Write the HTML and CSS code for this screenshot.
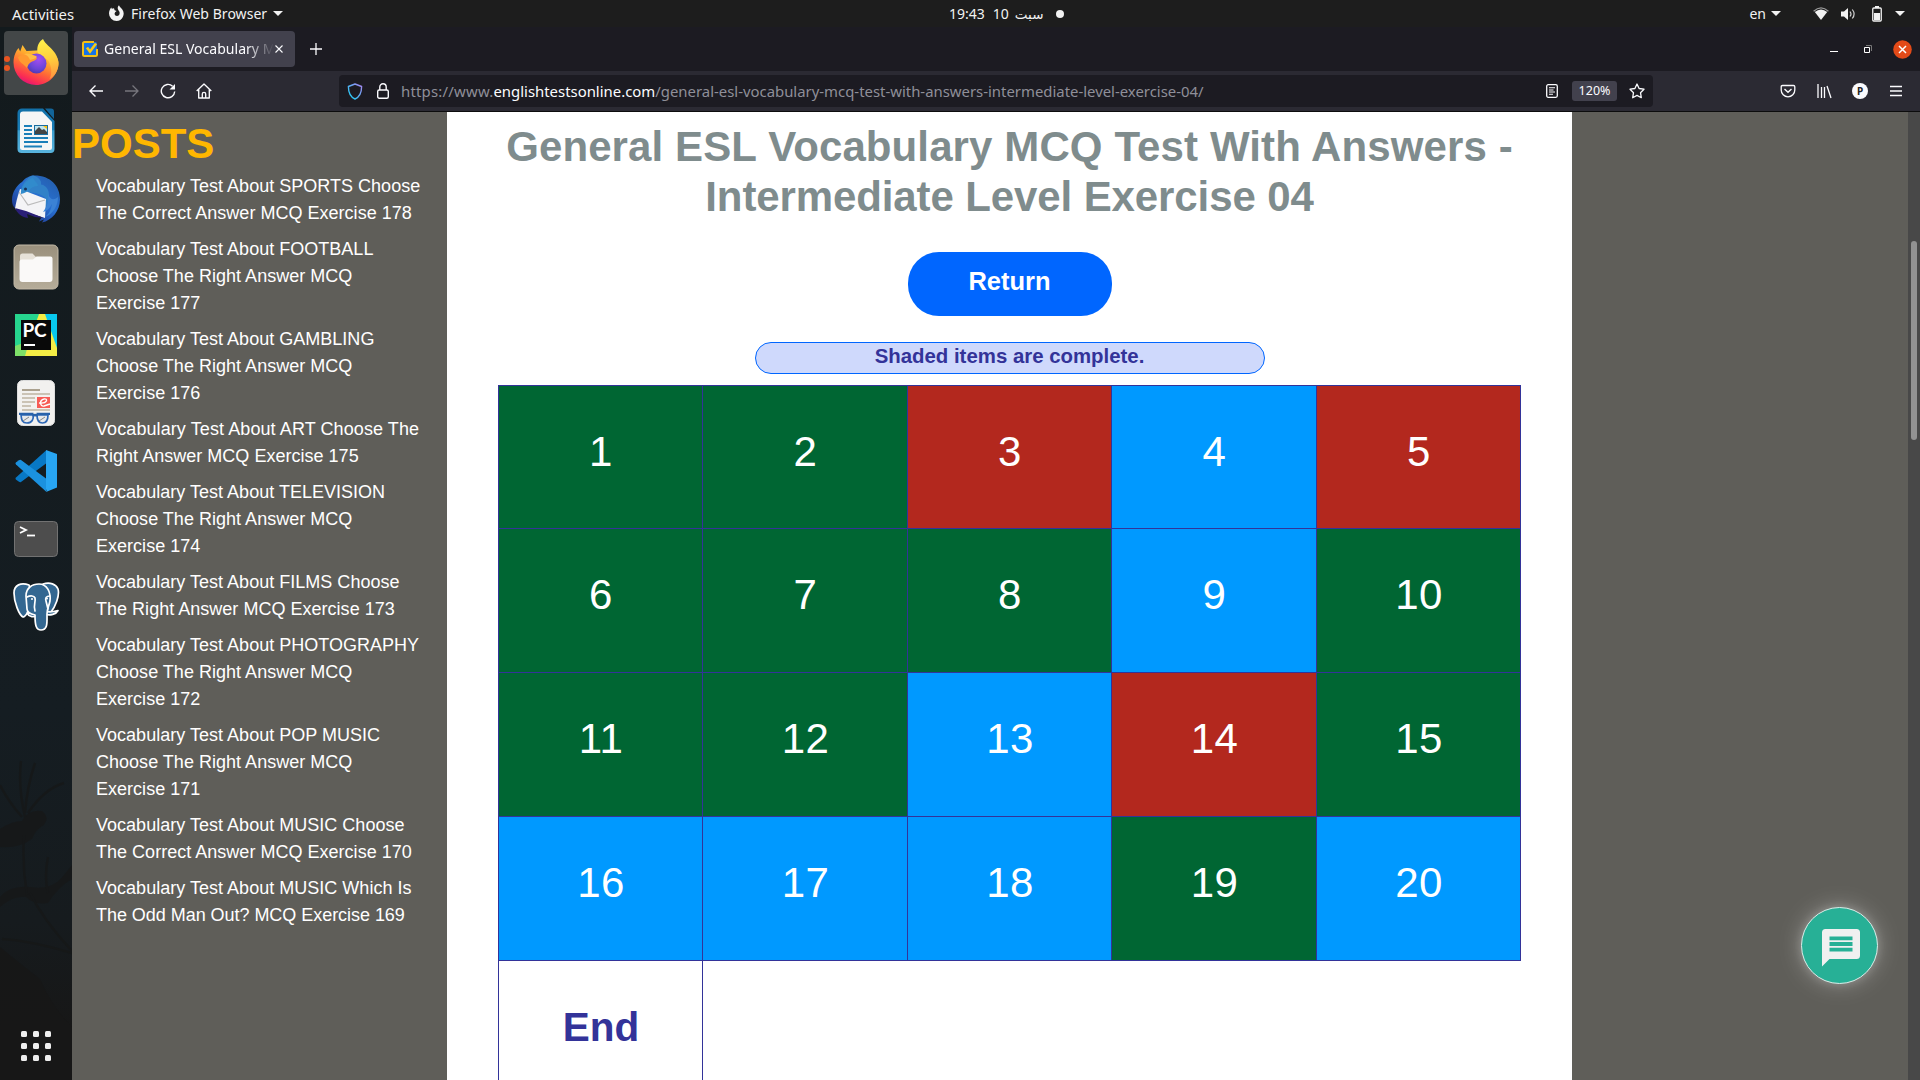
FILE: index.html
```html
<!DOCTYPE html>
<html lang="en">
<head>
<meta charset="utf-8">
<title>General ESL Vocabulary MCQ Test</title>
<link rel="stylesheet" href="styles.css">
</head>
<body>
<div class="desktop">
  <header class="topbar">
    <div class="top-left">
      <span class="activities">Activities</span>
      <span class="app-menu">
        <svg width="18" height="18" viewBox="0 0 18 18"><path d="M8.500 16a7.500 7.500 0 0 1-7.500-7.500C1 6 2 4 3.200 2.400l.6 1.400L6 3.200l.6 2 2 .8-1.500 1.300L6.500 9a2.600 2.600 0 0 0 5 .2c.5-2-.3-3-1.200-4.200C9.300 3.500 9.600 1.500 11 .2c.3 1.600 2 2.200 3.300 4.200A7.400 7.400 0 0 1 8.500 16z" fill="#f2f2f2"/></svg>
        <span class="app-name">Firefox Web Browser</span>
        <svg class="caret" width="10" height="5" viewBox="0 0 10 5"><path d="M0 0h10L5 5z" fill="#f2f2f2"/></svg>
      </span>
    </div>
    <div class="clock"><span>19:43</span><span class="day">10</span><span class="weekday" dir="rtl">سبت</span><i class="notice"></i></div>
    <div class="top-right">
      <span class="lang">en</span>
      <svg class="caret lang-caret" width="10" height="5" viewBox="0 0 10 5"><path d="M0 0h10L5 5z" fill="#f2f2f2"/></svg>
      <svg class="wifi" width="16" height="14" viewBox="0 0 16 14"><path d="M.6 4.200Q8-2.600 15.400 4.200" fill="none" stroke="#999" stroke-width="1.200"/><path d="M1.800 5Q8 0 14.200 5L8 13z" fill="#f2f2f2"/></svg>
      <svg class="volume" width="16" height="14" viewBox="0 0 16 14"><path d="M0 4.500h3L7 1v12L3 9.500H0z" fill="#f2f2f2"/><path d="M9 4.500q2 2.500 0 5M11.300 2.500q3.600 4.500 0 9" fill="none" stroke="#d0d0d0" stroke-width="1.200"/></svg>
      <svg class="battery" width="10" height="16" viewBox="0 0 10 16"><path d="M3 0h4v2H3z" fill="#f2f2f2"/><rect x=".75" y="2" width="8.500" height="13" rx="1" fill="none" stroke="#f2f2f2" stroke-width="1.300"/><path d="M2 7h6v7H2z" fill="#f2f2f2"/></svg>
      <svg class="caret" width="10" height="5" viewBox="0 0 10 5"><path d="M0 0h10L5 5z" fill="#f2f2f2"/></svg>
    </div>
  </header>

  <div class="workspace">
    <nav class="dock">
      <svg class="branches" width="72" height="330" viewBox="0 0 72 330"><path d="M0 230Q22 248 40 262 52 290 72 310V330H0z" fill="#171717"/><path d="M0 112q12-8 22-8 6-12 20-10 8 6 2 14-8 4-12 14-14 10-32 8zM0 180q10-12 30-10 22 4 34-12l8-10v14q-14 8-24 24-14 2-22-6-12-2-26 10z" fill="#171818"/><path d="M25 100Q18 70 21 44M25 96q2-26 10-50M28 96Q44 72 64 66M22 100Q8 84 0 68M24 118q-2 30 3 60M30 176q14 28 42 58M2 222q30 2 70 14M48 140q-4 20 0 36" fill="none" stroke="#161818" stroke-width="2.500"/></svg>
      <div class="dock-item active">
        <span class="running"><i></i><i></i></span>
        <svg class="firefox" width="48" height="48" viewBox="0 0 48 48">
          <defs>
            <linearGradient id="ff-body" x1=".8" y1="0" x2=".3" y2="1"><stop offset="0" stop-color="#ffe14a"/><stop offset=".35" stop-color="#ffb02e"/><stop offset=".62" stop-color="#ff6a36"/><stop offset=".85" stop-color="#fb2e52"/><stop offset="1" stop-color="#e0107c"/></linearGradient>
            <radialGradient id="ff-core" cx=".6" cy=".3" r=".8"><stop offset="0" stop-color="#a34ef0"/><stop offset=".6" stop-color="#6a45d6"/><stop offset="1" stop-color="#4536a8"/></radialGradient>
            <linearGradient id="ff-flame" x1=".4" y1="0" x2=".5" y2="1"><stop offset="0" stop-color="#fff14a"/><stop offset=".5" stop-color="#ffcf3c"/><stop offset="1" stop-color="#ff9440"/></linearGradient>
          </defs>
          <path d="M24 47A22.500 22.500 0 0 1 1.500 24.500C1.500 18 4 13 6.500 10l1.700 3.500L10.500 7l4 6L33 12c7 0 13 6 13.500 12.500C46.500 37 36.500 47 24 47z" fill="url(#ff-body)"/>
          <path d="M31 1c2 5 8 8 12 14 2 3 3.500 7 3.500 11 0 6-4 13-9 15 3-5 2-13-1-18-3-4-9-5-11-9-1-6 2-11 5.500-13z" fill="url(#ff-flame)"/>
          <circle cx="24.500" cy="25.500" r="10" fill="url(#ff-core)"/>
          <path d="M6 19c3-2 7-3 11-1 3 1 6 1 8 2-1 3-5 3-7 5-2 1-2 3-3 5-3-4-8-5-9-11z" fill="#ff9a30"/>
          <path d="M12 16c3-1 6-.5 9 1 2 .5 3 1 4 2-2 2-5 2-7 3-1-3-3-5-6-6z" fill="#ffbd45"/>
        </svg>
      </div>
      <div class="dock-item">
        <svg width="38" height="46" viewBox="0 0 38 46">
          <defs><linearGradient id="writer" x2="0" y2="1"><stop offset="0" stop-color="#1270a8"/><stop offset=".48" stop-color="#1b7fb9"/><stop offset=".5" stop-color="#3c9fcf"/><stop offset="1" stop-color="#58b3dd"/></linearGradient></defs>
          <path d="M5 .5h21L37.500 13v28a4 4 0 0 1-4 4h-29a4 4 0 0 1-4-4V5a4.500 4.500 0 0 1 4.500-4.500z" fill="url(#writer)"/>
          <path d="M28 .5h6a3 3 0 0 1 3 3V11z" fill="#12659a"/>
          <path d="M6 3.500h19L35 14v25.500a2.500 2.500 0 0 1-2.500 2.500h-27A2.500 2.500 0 0 1 3 39.500v-33a3 3 0 0 1 3-3z" fill="#f6f6f6"/>
          <path d="M7 18h8M7 22h8M7 26h8M7 30h24M7 34h24M7 38.500h18" stroke="#1b7fb9" stroke-width="2"/>
          <path d="M17 17h14v10H17z" fill="#1b6c9e"/><path d="M18 18h12v8H18z" fill="#c0e5ef"/><path d="M18 26v-3l4-4 3 3 2-1 3 3v2z" fill="#444"/><path d="M26 18h4v3z" fill="#ffc20e"/>
        </svg>
      </div>
      <div class="dock-item">
        <svg width="48" height="48" viewBox="0 0 48 48">
          <defs><linearGradient id="bird" x1="1" x2=".2" y2="1"><stop offset="0" stop-color="#245ba5"/><stop offset=".5" stop-color="#2870d1"/><stop offset="1" stop-color="#1d2b82"/></linearGradient></defs>
          <path d="M20 .5c18-1 28 10 28 24 0 11-8 21-18 23l2-3-5 2 3-5L4 34C1 32 0 29 0 25 0 17 5 10 10 7c3-4 6-5 10-6.500z" fill="url(#bird)"/>
          <path d="M10 19C7 14 14 2 21 .5c5 1 9 5 8 9 6 1 10 7 7 17l-5 14 3-17c-5-6-17-7-24-4.500z" fill="#3181c8"/>
          <path d="M8 14l26 10-1 19L3 34q1-8 5-20z" fill="#f4f4f6"/><path d="M7 17l9 13 17-5" fill="none" stroke="#bbb" stroke-width="1.200"/>
          <path d="M9 19C8 12 15 4 21 3c2 4 5 5 5 8-8 0-9 7-17 8z" fill="#318bcc"/><circle cx="13.500" cy="14" r="1.500" fill="#183155"/>
          <path d="M3 33l11 3 18 7-9-1-8-3 1 4C9 42 5 38 3 33z" fill="#2a1f77"/><path d="M36 19c1 6-1 13-5 18 4-1 7-4 9-8-1 6-3 10-7 13 8-3 13-11 13-20-4 3-7 4-10-3z" fill="#3b82d5"/>
        </svg>
      </div>
      <div class="dock-item">
        <svg width="46" height="46" viewBox="0 0 46 46"><defs><linearGradient id="files" x2="0" y2="1"><stop offset="0" stop-color="#9a907d"/><stop offset="1" stop-color="#b5ac99"/></linearGradient></defs><rect x="1" y="1" width="44" height="44" rx="5" fill="url(#files)" stroke="#c2b9a7" stroke-width="1"/><path d="M7 12a2.500 2.500 0 0 1 2.500-2.500h10l4 4-1 4H7z" fill="#e6e1d8"/><path d="M9 15.500h11l3.500-3h14a2 2 0 0 1 2 2V35a3 3 0 0 1-3 3h-27a3 3 0 0 1-3-3V18a2.500 2.500 0 0 1 2.500-2.500z" fill="#faf9f8"/></svg>
      </div>
      <div class="dock-item">
        <svg width="42" height="42" viewBox="0 0 42 42"><path d="M0 0h42v42H0z" fill="#26d58e"/><path d="M30 0h12v42H28z" fill="#08c8ee"/><path d="M0 32l16-6-4 16H0z" fill="#7de068"/><path d="M24 0h6l12 34v8H10l4-14z" fill="#f4ed45"/><path d="M6 6h30v30H6z" fill="#090909"/><text class="pc-text" x="7.500" y="22.500">PC</text><path d="M9 31h11" stroke="#fff" stroke-width="2"/></svg>
      </div>
      <div class="dock-item">
        <svg width="38" height="46" viewBox="0 0 38 46"><rect x=".5" y=".5" width="37" height="45" rx="5" fill="#f2f1ef" stroke="#ddd"/><path d="M5 10h18" stroke="#aba18f" stroke-width="2"/><path d="M5 14h28M5 18h13M5 22h13M5 26h9M5 30h28" stroke="#cbc3b5" stroke-width="2"/><path d="M20 17h13v11H20z" fill="#f75b55"/><path d="M22 23c9 1 9-5 5-4-5 1-4 8 0 7l6-2" fill="none" stroke="#fff" stroke-width="1.400"/><path d="M4 35h12c1 4-1 8-6 8S4.500 40 4 35zM20 35h11c0 5-2 8-5.500 8S20 40 20 35z" fill="#dfe3e8" fill-opacity=".65" stroke="#2d67b5" stroke-width="1.700"/><path d="M2 33.800h14.500M19.500 33.800H33M16 36q2-2 4 0" stroke="#2861aa" stroke-width="2.200" fill="none"/><path d="M6 41l6-4M22 41l6-4" fill="none" stroke="#888"/></svg>
      </div>
      <div class="dock-item">
        <svg width="42" height="42" viewBox="0 0 42 42"><path d="M1 27.500L31 .5v13L6 32q-1 .5-2-.2L.8 29.500q-.8-1 .2-2z" fill="#0878c5"/><path d="M1 14.500L31 41.500v-13L6 10q-1-.5-2 .2L.8 12.500q-.8 1 .2 2z" fill="#1b91df"/><path d="M31 0l11 4v33.500L31 42q1-1 0-3z" fill="#28a5f2"/></svg>
      </div>
      <div class="dock-item">
        <svg width="44" height="36" viewBox="0 0 44 36"><rect x=".5" y=".5" width="43" height="35" rx="4" fill="#4d4d4d" stroke="#727272"/><path d="M6 6l6 3-6 3" fill="none" stroke="#fff" stroke-width="1.800"/><path d="M13 14.500h8" stroke="#fff" stroke-width="1.800"/></svg>
      </div>
      <div class="dock-item">
        <svg width="48" height="50" viewBox="0 0 48 50"><g fill="#336791" stroke="#fff" stroke-width="1.700" stroke-linejoin="round" stroke-linecap="round"><path d="M17 3C9 0 2 3 2 11c0 9 5 22 9 24 2 0 4-4 6-6l4-12z"/><path d="M31 2c7-2 13 0 15 5 2 7-3 18-7 23-4 2-5-4-7-10z"/><path d="M24 31c-3-2-4 1-9 0 2 4 7 5 11 2M34 29c3 2 7 1 12-.5-2 4-8 5-12 4"/><path d="M14 14c0-8 6-12 13-12 8 0 12 8 11 17-1 5-3 8-3 13 0 8 1 16-6 16-5 0-6-5-6-15-4-1-8-2-8-6z"/><path d="M15 15c4-2 7-1 8 1 1 4-2 7 0 13M38 14c-4 0-5 2-4 5l2 8" fill="none"/></g><circle cx="20" cy="17" r="1" fill="#fff"/><circle cx="35" cy="16.500" r="1" fill="#fff"/></svg>
      </div>
      <div class="app-grid"><i></i><i></i><i></i><i></i><i></i><i></i><i></i><i></i><i></i></div>
    </nav>

    <main class="browser">
      <div class="tabs">
        <div class="tab">
          <svg width="16" height="16" viewBox="0 0 16 16"><rect x="1" y="1" width="14" height="14" rx="1.500" fill="#1673e6"/><path d="M12 1H2.500Q1 1 1 2.500v11Q1 15 2.500 15h11q1.500 0 1.500-1.500V8" fill="none" stroke="#f5bf12" stroke-width="2"/><path d="M5 6.500l3 4 6-8" fill="none" stroke="#f9c914" stroke-width="2.600"/></svg>
          <span class="tab-title">General ESL Vocabulary M</span>
          <svg class="tab-close" width="8" height="8" viewBox="0 0 8 8"><path d="M.5.5l7 7m0-7l-7 7" stroke="#fbfbfe" stroke-width="1.100"/></svg>
        </div>
        <svg class="new-tab" width="12" height="12" viewBox="0 0 12 12"><path d="M6 0v12M0 6h12" stroke="#fbfbfe" stroke-width="1.300"/></svg>
        <div class="window-buttons">
          <svg width="8" height="8" viewBox="0 0 8 8"><path d="M0 6.500h8" stroke="#fff"/></svg>
          <svg width="8" height="8" viewBox="0 0 8 8"><path d="M2 .5h5.500V6" stroke="#777" fill="none"/><path d="M.5 2.500h5v5h-5z" stroke="#fff" fill="none"/></svg>
          <svg width="19" height="19" viewBox="0 0 19 19"><circle cx="9.500" cy="9.500" r="9.300" fill="#e34a18"/><path d="M6 6l7 7m0-7l-7 7" stroke="#fff" stroke-width="1.500"/></svg>
        </div>
      </div>
      <div class="toolbar">
        <div class="nav-buttons">
          <svg width="16" height="16" viewBox="0 0 16 16"><path d="M15 8H2m5.500-5.500L2 8l5.500 5.500" fill="none" stroke="#fbfbfe" stroke-width="1.400"/></svg>
          <svg width="16" height="16" viewBox="0 0 16 16"><path d="M1 8h13M8.500 2.500L14 8l-5.500 5.500" fill="none" stroke="#77767d" stroke-width="1.300"/></svg>
          <svg width="16" height="16" viewBox="0 0 16 16"><path d="M12.600 3.200A6.700 6.700 0 1 0 14.700 8.500" fill="none" stroke="#fbfbfe" stroke-width="1.400"/><path d="M15 1v5.500H9.500z" fill="#fbfbfe"/></svg>
          <svg width="16" height="16" viewBox="0 0 16 16"><path d="M.7 8L8 1l7.300 7M2.700 6.500V15h10.600V6.500M6.300 15v-4a1.700 1.700 0 0 1 3.400 0v4" fill="none" stroke="#fbfbfe" stroke-width="1.350" stroke-linejoin="round"/></svg>
        </div>
        <div class="urlbar">
          <svg width="16" height="17" viewBox="0 0 16 17"><defs><linearGradient id="shield" x1="0" y1="1" x2="1" y2="0"><stop offset=".2" stop-color="#2ec5f4"/><stop offset="1" stop-color="#a982ee"/></linearGradient></defs><path d="M8 1l6.600 2.500c0 5-1 10-6.600 12.500C2.400 13.500 1.400 8.500 1.400 3.500z" fill="none" stroke="url(#shield)" stroke-width="1.400" stroke-linejoin="round"/></svg>
          <svg class="lock" width="12" height="16" viewBox="0 0 12 16"><rect x=".7" y="7" width="10.600" height="8.300" rx="1.500" fill="none" stroke="#fbfbfe" stroke-width="1.400"/><path d="M2.800 7V4a3.200 3.200 0 0 1 6.400 0v3" fill="none" stroke="#fbfbfe" stroke-width="1.400"/></svg>
          <span class="url"><span class="url-scheme">https://www.</span><span class="url-host">englishtestsonline.com</span><span class="url-path">/general-esl-vocabulary-mcq-test-with-answers-intermediate-level-exercise-04/</span></span>
          <svg class="reader" width="12" height="14" viewBox="0 0 12 14"><rect x=".7" y=".7" width="10.600" height="12.600" rx="1.500" fill="none" stroke="#fbfbfe" stroke-width="1.300"/><path d="M3 3.700h6M3 6h4.500M3 8h6M3 10.300h4" stroke="#fbfbfe" stroke-width="1.100"/></svg>
          <span class="zoom">120%</span>
          <svg class="star" width="16" height="16" viewBox="0 0 16 16"><path d="M8 1l2.100 4.500 4.900.7-3.500 3.500.8 5L8 12.400l-4.300 2.300.8-5L1 6.200l4.900-.7z" fill="none" stroke="#fbfbfe" stroke-width="1.300" stroke-linejoin="round"/></svg>
        </div>
        <div class="tools">
          <svg width="16" height="16" viewBox="0 0 16 16"><path d="M2.500 2.500h11q1.300 0 1.300 1.300V7A6.800 6.800 0 0 1 1.200 7V3.800q0-1.300 1.300-1.300z" fill="none" stroke="#fbfbfe" stroke-width="1.300"/><path d="M4.500 6l3.500 3.200L11.500 6" fill="none" stroke="#fbfbfe" stroke-width="1.400"/></svg>
          <svg width="16" height="16" viewBox="0 0 16 16"><path d="M2 1v14M5.500 4v11M8.500 4v11M11 3l4 12" fill="none" stroke="#fbfbfe" stroke-width="1.300"/></svg>
          <span class="avatar">P</span>
          <svg width="16" height="16" viewBox="0 0 16 16"><path d="M2 3.500h12M2 8h12M2 12.500h12" stroke="#fbfbfe" stroke-width="1.300"/></svg>
        </div>
      </div>

      <div class="page">
        <aside class="sidebar">
          <h2>POSTS</h2>
          <ul>
            <li>Vocabulary Test About SPORTS Choose<br>The Correct Answer MCQ Exercise 178</li>
            <li>Vocabulary Test About FOOTBALL<br>Choose The Right Answer MCQ<br>Exercise 177</li>
            <li>Vocabulary Test About GAMBLING<br>Choose The Right Answer MCQ<br>Exercise 176</li>
            <li><span class="loose">Vocabulary Test About ART Choose The</span><br>Right Answer MCQ Exercise 175</li>
            <li>Vocabulary Test About TELEVISION<br>Choose The Right Answer MCQ<br>Exercise 174</li>
            <li>Vocabulary Test About FILMS Choose<br>The Right Answer MCQ Exercise 173</li>
            <li>Vocabulary Test About PHOTOGRAPHY<br>Choose The Right Answer MCQ<br>Exercise 172</li>
            <li>Vocabulary Test About POP MUSIC<br>Choose The Right Answer MCQ<br>Exercise 171</li>
            <li>Vocabulary Test About MUSIC Choose<br>The Correct Answer MCQ Exercise 170</li>
            <li>Vocabulary Test About MUSIC Which Is<br><span class="tight">The Odd Man Out? MCQ Exercise 169</span></li>
          </ul>
        </aside>
        <article class="content">
          <h1><span class="title-main">General ESL Vocabulary MCQ Test With Answers -</span><br><span class="title-level">Intermediate Level Exercise 04</span></h1>
          <div class="return">Return</div>
          <div class="notice-pill">Shaded items are complete.</div>
          <div class="grid">
            <div class="cell right">1</div><div class="cell right">2</div><div class="cell wrong">3</div><div class="cell open">4</div><div class="cell wrong">5</div>
            <div class="cell right">6</div><div class="cell right">7</div><div class="cell right">8</div><div class="cell open">9</div><div class="cell right">10</div>
            <div class="cell right">11</div><div class="cell right">12</div><div class="cell open">13</div><div class="cell wrong">14</div><div class="cell right">15</div>
            <div class="cell open">16</div><div class="cell open">17</div><div class="cell open">18</div><div class="cell right">19</div><div class="cell open">20</div>
            <div class="cell end">End</div>
          </div>
        </article>
        <div class="gutter"></div>
        <div class="scrollbar"><div class="thumb"></div></div>
        <div class="chat">
          <svg width="38" height="38" viewBox="0 0 38 38"><path d="M3.500 0h31Q38 0 38 3.500v23q0 3.500-3.500 3.500H7.500L0 37.500v-34Q0 0 3.500 0z" fill="#f0f0f0"/><path d="M7.500 9.300h23M7.500 15h23M7.500 20.700h23" stroke="#27b096" stroke-width="3.800"/></svg>
        </div>
      </div>
    </main>
  </div>
</div>
</body>
</html>
```
FILE: styles.css
```css
* { box-sizing: border-box; }
body { margin: 0; background: #000; overflow: hidden; font-family: "Liberation Sans", Arial, sans-serif; }
svg { display: block; flex: none; }
.desktop { width: 1920px; height: 1080px; display: flex; flex-direction: column; overflow: hidden; }

/* system bar */
.topbar { height: 27px; flex: none; display: grid; grid-template-columns: 949px auto 1fr; align-items: center; background: #1d1d1d; color: #f2f2f2; font: 14px "Noto Sans", sans-serif; }
.top-left { display: flex; align-items: center; padding-left: 12px; }
.activities { width: 96px; font-size: 14.900px; }
.app-menu { display: flex; align-items: center; }
.app-name { margin: 0 6px 0 5px; white-space: nowrap; letter-spacing: .04px; }
.clock { display: flex; align-items: center; height: 27px; white-space: nowrap; }
.day { margin: 0 6px 0 8px; }
.weekday { font: 13.500px "DejaVu Sans", sans-serif; }
.notice { width: 8px; height: 8px; border-radius: 50%; background: #f2f2f2; margin-left: 13px; }
.top-right { display: flex; align-items: center; justify-content: flex-end; padding-right: 15px; }
.lang { margin-right: 5px; }
.wifi { margin-left: 32px; }
.volume { margin-left: 12px; }
.battery { margin: 0 13px 0 15px; }

.workspace { display: flex; flex: 1; min-height: 0; }

/* dock */
.dock { width: 72px; flex: none; position: relative; display: flex; flex-direction: column; align-items: center; gap: 4px; padding: 4px 0 19px; background: linear-gradient(#131a1d, #151d22 65%, #161b1e 85%, #171717 95%); }
.branches { position: absolute; left: 0; top: 690px; opacity: .8; }
.dock-item { width: 64px; height: 64px; flex: none; display: flex; align-items: center; justify-content: center; border-radius: 4px; position: relative; }
.dock-item.active { background: #434748; }
.firefox { margin-bottom: 2px; }
.running { position: absolute; left: 0; top: 25px; display: grid; gap: 3px; }
.running i { width: 6px; height: 6px; border-radius: 50%; background: #e95420; }
.pc-text { font: bold 19px Lato, sans-serif; fill: #fff; letter-spacing: -.3px; }
.app-grid { display: grid; grid-template-columns: repeat(3, 6px); gap: 6px; margin-top: auto; z-index: 1; }
.app-grid i { height: 6px; border-radius: 1.500px; background: #eee; }

/* browser chrome */
.browser { flex: 1; min-width: 0; display: flex; flex-direction: column; }
.tabs { height: 44px; flex: none; display: flex; align-items: center; background: #1c1b22; padding: 0 8px 0 2px; }
.tab { width: 221px; height: 36px; display: flex; align-items: center; padding: 0 12px 0 8px; background: #42414d; border-radius: 4px; }
.tab-title { flex: 1; min-width: 0; margin-left: 6px; overflow: hidden; white-space: nowrap; font: 14.050px/24px "Noto Sans", sans-serif; color: #fbfbfe; -webkit-mask-image: linear-gradient(90deg, #000 142px, transparent 170px); mask-image: linear-gradient(90deg, #000 142px, transparent 170px); }
.tab-close { margin-left: 2px; }
.new-tab { margin-left: 15px; }
.window-buttons { margin-left: auto; display: flex; align-items: center; }
.window-buttons svg:nth-child(2) { margin: 0 21px 0 26px; }
.toolbar { height: 41px; flex: none; display: flex; align-items: center; background: #2b2a33; border-bottom: 1px solid #0c0c0d; }
.nav-buttons { width: 267px; display: flex; gap: 20px; padding-left: 16px; }
.urlbar { width: 1314px; height: 32px; display: flex; align-items: center; background: #1c1b22; border-radius: 4px; padding: 0 8px; }
.lock { margin-left: 14px; }
.url { flex: 1; margin-left: 12px; color: #8f8f99; font: 14.900px "Noto Sans", sans-serif; white-space: nowrap; }
.url-scheme { letter-spacing: .22px; }
.url-host { color: #fbfbfe; }
.reader { margin-right: 14px; }
.zoom { width: 45px; height: 20px; border-radius: 3px; background: #42414d; color: #fbfbfe; font: 12.500px/20px "Noto Sans", sans-serif; text-align: center; }
.star { margin-left: 12px; }
.tools { margin-left: auto; display: flex; align-items: center; gap: 20px; padding-right: 16px; }
.avatar { width: 16px; height: 16px; border-radius: 50%; background: #fbfbfe; color: #222; font: bold 10px/16px "Noto Sans", sans-serif; text-align: center; }

/* page */
.page { flex: 1; min-height: 0; display: flex; background: #5f5e59; position: relative; overflow: hidden; }
.sidebar { width: 375px; flex: none; color: #fff; }
.sidebar h2 { margin: 0; padding-top: 7px; font-size: 42px; line-height: 50px; color: #ffb700; }
.sidebar ul { list-style: none; margin: 0; padding: 4px 0 0 24px; font-size: 18px; line-height: 27px; white-space: nowrap; letter-spacing: .02px; }
.sidebar li { margin-bottom: 9px; }
.loose { letter-spacing: .09px; }
.tight { letter-spacing: -.04px; }
.content { width: 1125px; flex: none; background: #fff; display: flex; flex-direction: column; align-items: center; color: #339; }
.content > * { flex: none; }
.content h1 { margin: 0; padding-top: 10px; font-size: 42px; line-height: 50px; color: #7f8c8d; text-align: center; white-space: nowrap; }
.title-main { letter-spacing: .11px; }
.title-level { letter-spacing: -.11px; }
.return { width: 204px; height: 64px; margin-top: 30px; border-radius: 31px; background: #06f; color: #fff; font-weight: bold; font-size: 25.500px; line-height: 59px; text-align: center; }
.notice-pill { width: 510px; height: 32px; margin-top: 26px; border: 1px solid #06f; border-radius: 16px; background: #cfd9fc; font-weight: bold; font-size: 20.400px; line-height: 27px; text-align: center; }
.grid { margin-top: 11px; margin-right: 1px; width: 1023px; display: grid; grid-template-columns: 204px 205px 204px 205px 204px; grid-template-rows: 143px 144px 144px 144px 144px; border-left: 1px solid #339; border-top: 1px solid #339; }
.cell { border-right: 1px solid #339; border-bottom: 1px solid #339; padding-left: 2px; text-align: center; color: #fff; font-size: 42px; line-height: 132px; letter-spacing: .5px; }
.right { background: #063; }
.wrong { background: #b3281e; }
.open { background: #09f; }
.end { color: #339; font-weight: bold; font-size: 40.500px; letter-spacing: 0; }
.gutter { flex: 1; }
.scrollbar { width: 12px; background: #484848; padding: 129px 3px 0; }
.thumb { width: 6px; height: 199px; border-radius: 3px; background: #929292; }
.chat { position: absolute; left: 1729px; top: 795px; width: 77px; height: 77px; border-radius: 50%; background: #27b096; border: 1px solid #d8eee9; box-shadow: 0 0 24px rgba(255,255,255,.3), 0 0 10px rgba(255,255,255,.2); display: flex; justify-content: center; padding: 21px 0 0 3px; }
```
